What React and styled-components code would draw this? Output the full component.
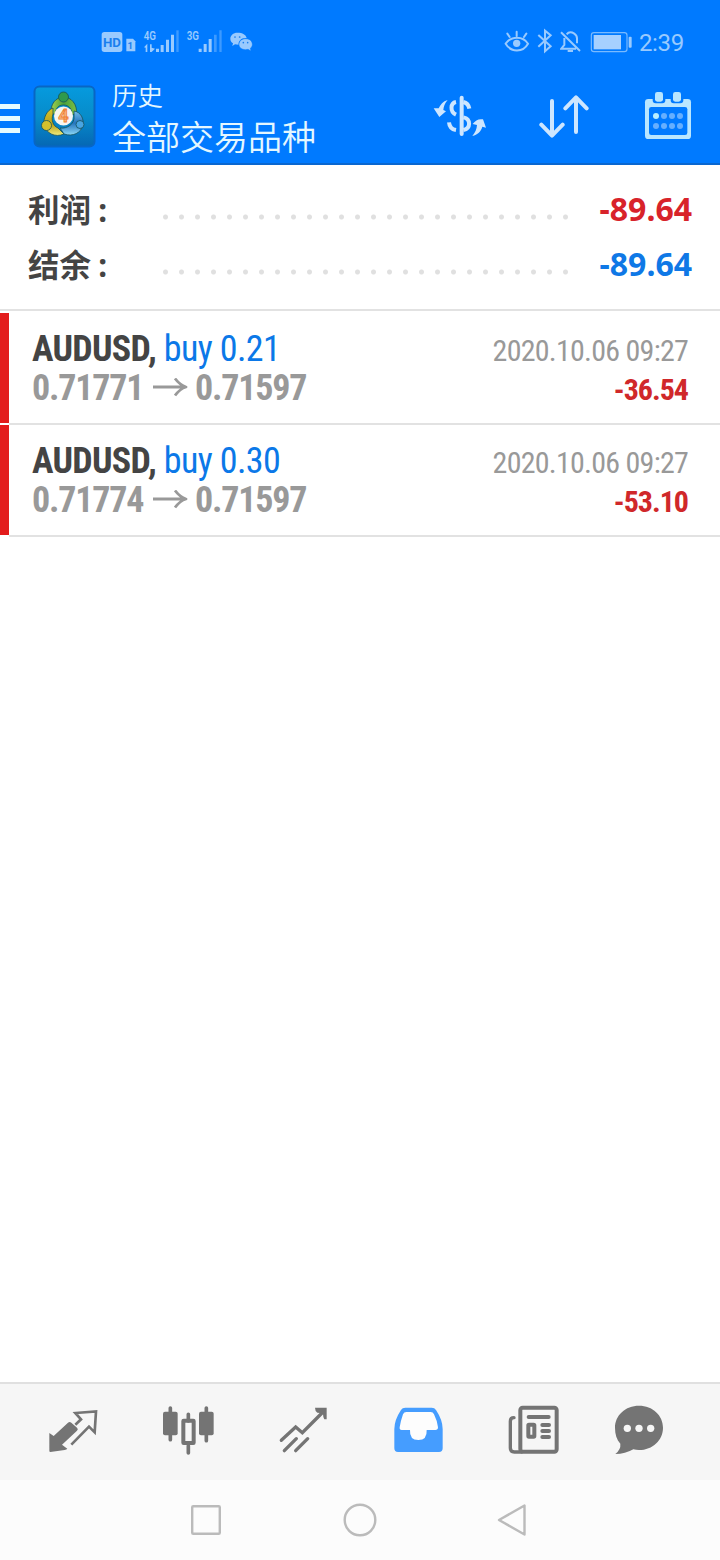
import React from 'react'
import styled, { createGlobalStyle } from 'styled-components'

const GlobalStyle = createGlobalStyle`
    body {
        margin: 0;
        background: #fff;
    }
    svg {
        display: block;
        flex: none;
    }
`

const Screen = styled.div`
    display: flex;
    flex-direction: column;
    width: 720px;
    height: 1560px;
    background: #fff;
    font-family: Roboto, "Noto Sans CJK SC", sans-serif;
    overflow: hidden;
`

const Header = styled.header`
    box-sizing: border-box;
    height: 165px;
    background: #007aff;
    border-bottom: 2px solid #0a67d0;
`

const StatusBar = styled.div`
    display: flex;
    align-items: center;
    justify-content: space-between;
    height: 84px;
    padding: 0 36px 0 101px;
    color: #99cafe;
`

const StatusGroup = styled.div`
    display: flex;
    align-items: center;
    gap: ${(p) => p.$gap}px;
`

const Clock = styled.span`
    font-size: 24px;
    line-height: 30px;
    letter-spacing: -0.3px;
    padding-top: 1px;
`

const Toolbar = styled.div`
    display: flex;
    align-items: center;
    height: 66px;
    padding-right: 28px;
`

const Menu = styled.div`
    display: grid;
    gap: 7px;
    width: 20px;
    margin: 3px 13px 0 0;
`

const MenuLine = styled.span`
    height: 5px;
    background: #e6fbff;
`

const Titles = styled.div`
    flex: 1;
    margin-left: 16px;
    color: #e4f7ff;
    font-family: "Noto Sans CJK SC", sans-serif;
    font-weight: 350;
`

const Section = styled.div`
    font-size: 25.5px;
    line-height: 36px;
`

const Title = styled.div`
    font-size: 34px;
    line-height: 46px;
    padding-top: 1px;
    margin-bottom: -1px;
`

const Actions = styled.div`
    display: flex;
    gap: 52px;
`

const Summary = styled.section`
    box-sizing: border-box;
    height: 146px;
    padding: 16px 28px 0 28px;
    border-bottom: 2px solid #e2e2e2;
    font-family: "Noto Sans", "Noto Sans CJK SC", sans-serif;
    font-size: 32px;
    font-weight: 700;
`

const SummaryRow = styled.div`
    display: flex;
    align-items: center;
    height: 55px;
`

const Label = styled.span`
    width: 130px;
    margin-top: -2px;
    color: #444;
    font-size: 31.5px;
    word-spacing: -1px;
`

const Dots = styled.span`
    width: 416px;
    height: 16px;
    margin-top: 17px;
    background: radial-gradient(circle at 7.5px 8px, #e0e0e0 2px, transparent 3px) 0 0 / 16px 16px;
`

const Value = styled.span`
    flex: 1;
    text-align: right;
    font-kerning: none;
    color: ${(p) => p.$color};
`

const Deals = styled.main`
    flex: 1;
    padding-top: 2px;
`

const Deal = styled.article`
    display: flex;
    box-sizing: border-box;
    height: 112px;
`

const Mark = styled.div`
    width: 9px;
    height: 110px;
    background: #e31c1c;
`

const DealBody = styled.div`
    flex: 1;
    display: flex;
    justify-content: space-between;
    box-sizing: border-box;
    padding: 16px 32px 0 23px;
    border-bottom: 2px solid #e2e2e2;
    font-family: "Roboto Condensed", Roboto, sans-serif;
    font-stretch: 75%;
`

const DealSide = styled.div`
    padding-top: 2px;
`

const Line = styled.div`
    display: flex;
    align-items: center;
    justify-content: ${(p) => (p.$end ? 'flex-end' : 'flex-start')};
    height: 39px;
    font-size: ${(p) => p.$size}px;
    font-weight: ${(p) => (p.$bold ? 700 : 400)};
    letter-spacing: ${(p) => p.$spacing}px;
    color: ${(p) => p.$color};
    white-space: pre;
`

const Side = styled.span`
    font-weight: 400;
    letter-spacing: -0.6px;
    color: #0b78e8;
`

const Price = styled.span`
    width: 121px;
`

const ClosePrice = styled.span`
    margin-left: 7px;
`

const TabBar = styled.nav`
    display: grid;
    grid-template-columns: repeat(5, 115px) 97px;
    justify-items: center;
    align-items: center;
    height: 96px;
    padding-left: 15.5px;
    border-top: 2px solid #e0e0e0;
    background: #f6f6f6;
`

const SystemNav = styled.nav`
    display: grid;
    grid-template-columns: repeat(3, 154px);
    justify-content: center;
    justify-items: center;
    align-items: center;
    height: 80px;
    background: #fcfcfc;
`

const NetIcon = ({ label, x, children }) => (
    <svg width="37" height="30" viewBox={`${x} 21 111 90`} fill="#99cafe">
        <text x={x + 2} y="59" fontFamily="Roboto" fontWeight="600" fontSize="38" textLength="37" lengthAdjust="spacingAndGlyphs">{label}</text>
        {children}
    </svg>
)

const HdIcon = () => (
    <svg width="35" height="30" viewBox="33 21 105 90">
        <rect x="35" y="36" width="62" height="60" rx="8" fill="#99cafe" />
        <text x="66" y="80" textAnchor="middle" fontFamily="Roboto" fontWeight="700" fontSize="40" fill="#1a7fee" textLength="54" lengthAdjust="spacingAndGlyphs">HD</text>
        <path d="M109 56h20l7 8v30h-27z" fill="#99cafe" />
        <text x="121" y="87" textAnchor="middle" fontFamily="Roboto" fontWeight="700" fontSize="29" fill="#1a7fee">1</text>
    </svg>
)

const WechatIcon = () => (
    <svg width="24" height="30" viewBox="419 21 72 90" fill="#99cafe">
        <path d="M441 38c-12 0-21 8-21 18 0 6 3 11 8 14l-2 8 8-5 11 1c-1-12 8-21 24-20-2-10-12-16-28-16z" />
        <path d="M466 56c-12 0-20 7-20 17s8 16 20 16l7-1 9 5-2-8c4-3 6-7 6-12 0-10-8-17-20-17z" stroke="#007aff" strokeWidth="1.5" />
        <g fill="#1a7fee">
            <circle cx="434" cy="51" r="2.6" />
            <circle cx="448" cy="51" r="2.6" />
            <circle cx="459" cy="68" r="2.4" />
            <circle cx="472" cy="68" r="2.4" />
        </g>
    </svg>
)

const EyeIcon = () => (
    <svg width="26" height="30" viewBox="42 21 78 90" fill="none" stroke="#99cafe" strokeWidth="6" strokeLinecap="round">
        <path d="M47 71c16-24 52-24 67 0-15 27-51 27-67 0z" />
        <circle cx="80" cy="70" r="11" fill="#99cafe" stroke="none" />
        <path d="M80 48V35M59 51l-7-10M102 51l7-10" />
    </svg>
)

const BluetoothIcon = () => (
    <svg width="16" height="30" viewBox="138 21 48 90" fill="none" stroke="#99cafe" strokeWidth="6">
        <path d="M142 45l37 34-17 15V32l17 14-37 34" />
    </svg>
)

const BellOffIcon = () => (
    <svg width="22" height="30" viewBox="209 21 66 90" fill="none" stroke="#99cafe" strokeWidth="6">
        <path d="M212 37l57 56M222 54v21l-9 11h44M229 43c3-4 7-6 11-6s21 4 20 20v13M232 93h16" />
    </svg>
)

const BatteryIcon = () => (
    <svg width="43" height="30" viewBox="298 21 129 90">
        <rect x="305" y="38" width="107" height="57" rx="8" fill="none" stroke="#7abafe" strokeWidth="3.5" />
        <rect x="312" y="45" width="82" height="43" fill="#a6d0ff" />
        <rect x="417" y="50" width="9" height="33" rx="3" fill="#99cafe" />
    </svg>
)

const AppLogo = () => (
    <svg width="63" height="64" viewBox="0 0 63 64">
        <defs>
            <linearGradient id="tile" x1="0" y1="0" x2="0" y2="1">
                <stop offset="0" stopColor="#069ade" />
                <stop offset="0.5" stopColor="#078cca" />
                <stop offset="1" stopColor="#0567b4" />
            </linearGradient>
            <linearGradient id="green" x1="0" y1="0" x2="1" y2="0">
                <stop offset="0" stopColor="#a5d24e" />
                <stop offset="0.5" stopColor="#4a9f3b" />
                <stop offset="1" stopColor="#7cbf45" />
            </linearGradient>
            <linearGradient id="gold" x1="0" y1="0" x2="0" y2="1">
                <stop offset="0" stopColor="#d9c52a" />
                <stop offset="0.6" stopColor="#b8a01a" />
                <stop offset="1" stopColor="#f1ec7c" />
            </linearGradient>
            <linearGradient id="sky" x1="0" y1="0" x2="0" y2="1">
                <stop offset="0" stopColor="#77bdea" />
                <stop offset="0.5" stopColor="#2474bd" />
                <stop offset="1" stopColor="#8bd7f6" />
            </linearGradient>
        </defs>
        <rect x="1.500" y="1.500" width="60" height="60" rx="5" fill="url(#tile)" stroke="#0866c4" strokeWidth="2" />
        <g stroke="#15505a" strokeWidth="0.8">
            <path d="M18 29c-1-10 5-17 12.500-17s14 7 13 17l-5 1c1-6-3-10-8-10s-8 3-8 9z" fill="url(#green)" />
            <path d="M20 23c-6 2-10 10-9 17 2 8 11 13 20 9l-6-6c-5-2-7-8-5-14z" fill="url(#gold)" />
            <path d="M41 26c7 1 10 8 9 14-2 8-10 12-19 9l-4-6c7 1 15-4 14-12z" fill="url(#sky)" />
            <circle cx="30.500" cy="12" r="5" fill="#2f9a4c" />
            <circle cx="13.500" cy="40.500" r="5" fill="#d5c12d" />
            <circle cx="47" cy="39.500" r="4" fill="#48a5e2" />
        </g>
        <circle cx="30.500" cy="31" r="9.500" fill="#f7f4f0" />
        <text x="30.500" y="37.300" textAnchor="middle" fontFamily="Roboto" fontSize="18" fontWeight="700" fill="#f9b27a" stroke="#ee7f34" strokeWidth="0.800">4</text>
    </svg>
)

const CurrencyIcon = () => (
    <svg width="54" height="50" viewBox="40 36 162 150" fill="none" stroke="#cde6ff" strokeWidth="12">
        <path d="M126 53v109" strokeWidth="12" strokeLinecap="round" />
        <path d="M109 66c-17 3-19 29 0 38M88 127c1 13 9 21 21 23" />
        <path d="M131 66c9 2 16 8 18 20M131 112c23 5 23 33 0 38" />
        <path d="M84 60c-14 4-22 14-27 25l-15 0 17 26 20-17-8-4c1-11 4-19 13-30z" fill="#cde6ff" stroke="none" />
        <path d="M158 168c16-4 26-14 30-28l11 3-9-25c-14-2-22 2-31 14l13 3c-1 13-5 22-14 33z" fill="#cde6ff" stroke="none" />
    </svg>
)

const SortIcon = () => (
    <svg width="53" height="50" viewBox="357 36 159 150" fill="none" stroke="#cde6ff" strokeWidth="12" strokeLinecap="round" strokeLinejoin="round">
        <path d="M396 63v101M364 134l32 33 32-33M468 156V54M436 85l32-33 32 33" />
    </svg>
)

const CalendarIcon = () => (
    <svg width="48" height="50" viewBox="672 36 144 150">
        <rect x="675" y="57" width="138" height="120" rx="10" fill="#b9e6ff" />
        <path d="M698 57h38v4q0 9-9 9h-20q-9 0-9-9zM752 57h38v4q0 9-9 9h-20q-9 0-9-9z" fill="#007aff" />
        <rect x="705" y="36" width="24" height="29" rx="7" fill="#b9e6ff" />
        <rect x="759" y="36" width="24" height="29" rx="7" fill="#b9e6ff" />
        <rect x="687" y="81" width="115" height="84" rx="7" fill="#007aff" />
        <circle cx="708" cy="108" r="9" fill="#b9efff" />
        {[732, 756, 780].map((x) => <circle key={x} cx={x} cy="108" r="9" fill="#66affe" />)}
        {[708, 732, 756, 780].map((x) => <circle key={x} cx={x} cy="138" r="9" fill="#66affe" />)}
    </svg>
)

const ArrowIcon = () => (
    <svg width="35" height="20" viewBox="0 0 35 20" fill="none" stroke="#999" strokeWidth="2.8" strokeLinejoin="round">
        <path d="M0 9h33M22 0.5c3 4 6 7 11 8.500c-5 1.500-8 4.500-11 8.500" />
    </svg>
)

const QuotesIcon = () => (
    <svg width="54" height="54" viewBox="48 90 162 162" fill="none" stroke="#747474" strokeWidth="8">
        <path d="M58 174l13 9 43-40q5-4 10 0l17 15q5 4 0 9l-45 42 16 12q-2 3-8 4l-43 6q-3 0-3-4z" fill="#747474" stroke="none" />
        <path d="M136 149l17-16-17-19 62-5-4 63-17-17-53 54" strokeLinejoin="miter" />
    </svg>
)

const ChartIcon = () => (
    <svg width="54" height="54" viewBox="393 90 162 162" fill="none" stroke="#747474" strokeWidth="12" strokeLinecap="round">
        <path d="M421 99v95M475 118v20M475 212v22M529 99v98" strokeWidth="11" />
        <rect x="399" y="110" width="44" height="71" rx="6" fill="#747474" stroke="none" />
        <rect x="507" y="110" width="44" height="71" rx="6" fill="#747474" stroke="none" />
        <rect x="460" y="137" width="31" height="67" rx="1" />
    </svg>
)

const TradeIcon = () => (
    <svg width="54" height="54" viewBox="738 90 162 162" fill="none" stroke="#747474" strokeWidth="10" strokeLinecap="round">
        <path d="M754 196l43-40 20 17 65-65M763 227l36-36M797 227l36-36" />
        <path d="M855 98h35v35h-7q-4-7-4-16-8-4-17-4-7-5-7-15z" fill="#747474" stroke="none" />
    </svg>
)

const HistoryIcon = () => (
    <svg width="54" height="54" viewBox="63 90 162 162">
        <path d="M106 98h79q9 0 13 7 20 30 20 57v58q0 11-11 11H84q-11 0-11-11v-58q0-27 20-57 4-7 13-7z" fill="#459dff" />
        <path d="M109 111h73q7 0 10 7 10 20 12 39 0 8-8 8h-26q2 30-25 30t-25-30H95q-7 0-6-8 3-19 10-39 3-7 10-7z" fill="#fdfdfd" />
    </svg>
)

const NewsIcon = () => (
    <svg width="54" height="54" viewBox="408 90 162 162" fill="none" stroke="#747474" strokeWidth="12" strokeLinecap="round">
        <rect x="451" y="98" width="109" height="132" rx="7" fill="#f6f6f6" strokeWidth="12" />
        <path d="M432 128q-11 0-11 11v80q0 12 12 12h22" strokeWidth="10" />
        <path d="M476 126h60M517 150h20M517 168h20M517 186h20" />
        <rect x="475" y="149" width="18" height="36" rx="2" strokeWidth="12" />
    </svg>
)

const ChatIcon = () => (
    <svg width="54" height="54" viewBox="726 90 162 162">
        <path d="M807 92c41 0 72 29 72 66s-31 67-72 67q-9 0-17-2-24 14-54 14 17-14 15-31c-11-12-16-28-16-48 0-37 31-66 72-66z" fill="#747474" />
        {[772, 807, 842].map((x) => <circle key={x} cx={x} cy="160" r="11" fill="#f6f6f6" />)}
    </svg>
)

const summary = [
    { label: '利润', value: '-89.64', color: '#d8232a' },
    { label: '结余', value: '-89.64', color: '#0f78e6' },
]

const deals = [
    { symbol: 'AUDUSD', side: 'buy 0.21', open: '0.71771', close: '0.71597', time: '2020.10.06 09:27', profit: '-36.54' },
    { symbol: 'AUDUSD', side: 'buy 0.30', open: '0.71774', close: '0.71597', time: '2020.10.06 09:27', profit: '-53.10' },
]

const App = () => {
    return (
        <Screen>
            <GlobalStyle />
            <Header>
                <StatusBar>
                    <StatusGroup $gap={6.5}>
                        <HdIcon />
                        <NetIcon label="4G" x={159}>
                            <path d="M162 82l10-11v25h-5V83zM180 73h5l0 10 10 3-10 10h-5zM198 86h9v10h-9zM212 75h9v21h-9zM228 59h9v37h-9zM243 44h9v52h-9z" />
                            <path d="M259 31h7v65h-7z" opacity="0.4" />
                        </NetIcon>
                        <NetIcon label="3G" x={289}>
                            <path d="M327 86h9v10h-9zM342 72h9v24h-9zM357 57h9v39h-9z" />
                            <path d="M373 44h8v52h-8zM389 31h7v65h-7z" opacity="0.4" />
                        </NetIcon>
                        <WechatIcon />
                    </StatusGroup>
                    <StatusGroup $gap={7}>
                        <EyeIcon />
                        <BluetoothIcon />
                        <BellOffIcon />
                        <BatteryIcon />
                        <Clock>2:39</Clock>
                    </StatusGroup>
                </StatusBar>
                <Toolbar>
                    <Menu>
                        <MenuLine />
                        <MenuLine />
                        <MenuLine />
                    </Menu>
                    <AppLogo />
                    <Titles>
                        <Section>历史</Section>
                        <Title>全部交易品种</Title>
                    </Titles>
                    <Actions>
                        <CurrencyIcon />
                        <SortIcon />
                        <CalendarIcon />
                    </Actions>
                </Toolbar>
            </Header>
            <Summary>
                {summary.map((row) => (
                    <SummaryRow key={row.label}>
                        <Label>{row.label} :</Label>
                        <Dots />
                        <Value $color={row.color}>{row.value}</Value>
                    </SummaryRow>
                ))}
            </Summary>
            <Deals>
                {deals.map((deal) => (
                    <Deal key={deal.open}>
                        <Mark />
                        <DealBody>
                            <div>
                                <Line $size={36} $spacing={-0.7} $bold $color="#444">{deal.symbol}, <Side>{deal.side}</Side></Line>
                                <Line $size={36} $spacing={-1.2} $bold $color="#999">
                                    <Price>{deal.open}</Price>
                                    <ArrowIcon />
                                    <ClosePrice>{deal.close}</ClosePrice>
                                </Line>
                            </div>
                            <DealSide>
                                <Line $size={30} $spacing={-0.75} $end $color="#999">{deal.time}</Line>
                                <Line $size={30} $spacing={-1} $end $bold $color="#d0282a">{deal.profit}</Line>
                            </DealSide>
                        </DealBody>
                    </Deal>
                ))}
            </Deals>
            <TabBar>
                <QuotesIcon />
                <ChartIcon />
                <TradeIcon />
                <HistoryIcon />
                <NewsIcon />
                <ChatIcon />
            </TabBar>
            <SystemNav>
                <svg width="32" height="32" viewBox="0 0 32 32" fill="none" stroke="#bbb" strokeWidth="2.400">
                    <rect x="2.200" y="2.200" width="27.600" height="27.600" rx="1" />
                </svg>
                <svg width="34" height="34" viewBox="0 0 34 34" fill="none" stroke="#bbb" strokeWidth="2.400">
                    <circle cx="17" cy="17" r="15.300" />
                </svg>
                <svg width="34" height="34" viewBox="0 0 34 34" fill="none" stroke="#bbb" strokeWidth="2.400" strokeLinejoin="round">
                    <path d="M27.500 2.500v29L2 17z" />
                </svg>
            </SystemNav>
        </Screen>
    )
}

export default App
